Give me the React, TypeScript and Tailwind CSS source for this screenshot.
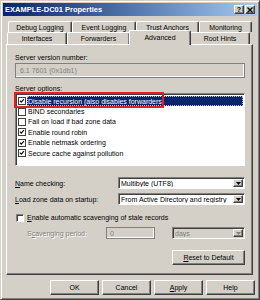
const raised =
  'border border-t-white border-l-white border-r-[#404040] border-b-[#404040] shadow-[inset_-1px_-1px_0_#808080]';
const sunken =
  'border border-t-[#808080] border-l-[#808080] border-r-white border-b-white shadow-[inset_1px_1px_0_#404040]';

const row1 = [
  { label: 'Debug Logging', w: 'w-[64px]' },
  { label: 'Event Logging', w: 'w-[64px]' },
  { label: 'Trust Anchors', w: 'w-[63px]' },
  { label: 'Monitoring', w: 'w-[53px]' },
];
const row2 = [
  { label: 'Interfaces', w: 'w-[60px]' },
  { label: 'Forwarders', w: 'w-[63px]' },
  { label: 'Advanced', w: 'w-[62px]', active: true },
  { label: 'Root Hints', w: 'w-[60px]' },
];

const options = [
  { label: 'Disable recursion (also disables forwarders)', checked: true, selected: true },
  { label: 'BIND secondaries', checked: false },
  { label: 'Fail on load if bad zone data', checked: false },
  { label: 'Enable round robin', checked: true },
  { label: 'Enable netmask ordering', checked: true },
  { label: 'Secure cache against pollution', checked: true },
];

function Check({ on, flat = false }: { on: boolean; flat?: boolean }) {
  return (
    <div className={`w-[8px] h-[8px] bg-white shrink-0 ${flat ? 'border border-[#404040]' : sunken}`}>
      {on && (
        <svg viewBox="0 0 8 8" className="w-full h-full block">
          <path d="M1.2 3.6 L3 5.5 L6.6 1.6" fill="none" stroke="#000" strokeWidth="1.4" />
        </svg>
      )}
    </div>
  );
}

function Arrow({ disabled = false }: { disabled?: boolean }) {
  return (
    <div className={`w-[10px] self-stretch bg-[#d4d0c8] ${raised} flex items-center justify-center`}>
      <svg viewBox="0 0 5 3" className="w-[5px] h-[3px]">
        <path d="M0 0 H5 L2.5 3 Z" fill={disabled ? '#808080' : '#000'} />
      </svg>
    </div>
  );
}

function Combo({ value, disabled = false, w = 'w-[127px]' }: { value: string; disabled?: boolean; w?: string }) {
  return (
    <div className={`${w} h-[12px] ${sunken} ${disabled ? 'bg-[#d4d0c8]' : 'bg-white'} flex items-center p-[1px] pl-[2px]`}>
      <span className={`flex-1 truncate ${disabled ? 'text-[#808080]' : ''}`}>{value}</span>
      <Arrow disabled={disabled} />
    </div>
  );
}

function Btn({ children, w = 'w-[49px]' }: { children: React.ReactNode; w?: string }) {
  return (
    <div className={`${w} h-[15px] bg-[#d4d0c8] ${raised} flex items-center justify-center`}>{children}</div>
  );
}

export default function App() {
  return (
    <div className="w-[260px] h-[300px] bg-[#d4d0c8] border border-t-[#d4d0c8] border-l-[#d4d0c8] border-r-[#404040] border-b-[#404040] shadow-[inset_1px_1px_0_#fff,inset_-1px_-1px_0_#808080] p-[1px] font-['Liberation_Sans',Arial,sans-serif] text-[7px] leading-none text-black flex flex-col">
      {/* Title bar */}
      <div className="h-[13px] mt-[1px] mx-[1px] bg-linear-to-r from-[#0a246a] to-[#a6caf0] flex items-center pl-[2px] pr-[2px]">
        <span className="text-white font-bold text-[7.5px] flex-1">EXAMPLE-DC01 Properties</span>
        <div className="flex gap-[1px]">
          <div className={`w-[10px] h-[9px] bg-[#d4d0c8] ${raised} flex items-center justify-center font-bold text-[7px]`}>?</div>
          <div className={`w-[10px] h-[9px] bg-[#d4d0c8] ${raised} flex items-center justify-center`}>
            <svg viewBox="0 0 6 6" className="w-[6px] h-[6px]">
              <path d="M0.5 0.5 L5.5 5.5 M5.5 0.5 L0.5 5.5" stroke="#000" strokeWidth="1.3" />
            </svg>
          </div>
        </div>
      </div>

      {/* Tabs */}
      <div className="mt-[5px] ml-[4px] w-[247px]">
        <div className="flex ml-[2px] h-[11px]">
          {row1.map(t => (
            <div key={t.label} className={`${t.w} h-full border border-b-0 border-t-white border-l-white border-r-[#404040] rounded-t-[2px] shadow-[inset_-1px_0_0_#808080] flex items-center justify-center`}>
              {t.label}
            </div>
          ))}
        </div>
        <div className="flex ml-[1px] h-[12px] relative">
          {row2.map(t =>
            t.active ? (
              <div key={t.label} className={`${t.w} -mx-[1px] -mt-[2px] h-[15px] relative z-10 bg-[#d4d0c8] border border-b-0 border-t-white border-l-white border-r-[#404040] rounded-t-[2px] shadow-[inset_-1px_0_0_#808080] flex items-center justify-center pb-[2px]`}>
                {t.label}
              </div>
            ) : (
              <div key={t.label} className={`${t.w} h-full border border-b-0 border-t-white border-l-white border-r-[#404040] rounded-t-[2px] shadow-[inset_-1px_0_0_#808080] flex items-center justify-center`}>
                {t.label}
              </div>
            )
          )}
        </div>

        {/* Panel */}
        <div className="h-[231px] border border-t-white border-l-white border-r-[#404040] border-b-[#404040] shadow-[inset_-1px_-1px_0_#808080] pl-[8px] pr-[7px] flex flex-col">
          <div className="mt-[9px] h-[7px]">Server version number:</div>
          <div className="mt-[2px] h-[15px] bg-[#d4d0c8] border border-[#808080] shadow-[inset_-1px_-1px_0_#fff] flex items-center pl-[4px] text-[#808080]">
            6.1 7601 (0x1db1)
          </div>
          <div className="mt-[7px] h-[7px]">
            <span className="underline">S</span>erver options:
          </div>
          <div className={`relative mt-[1px] h-[73px] bg-white ${sunken} pt-[2px] pl-[1px] pr-[1px]`}>
            {options.map(o => (
              <div key={o.label} className="h-[10.4px] flex items-center pl-[1px]">
                <Check on={o.checked} flat />
                {o.selected ? (
                  <div className="flex-1 h-[10px] ml-[1px] bg-[#0a246a] text-white flex items-center pl-[1px] outline-1 outline-dotted outline-[#c0c0c0] -outline-offset-1">
                    {o.label}
                  </div>
                ) : (
                  <div className="flex-1 ml-[2px]">{o.label}</div>
                )}
              </div>
            ))}
            <div className="absolute left-[-2px] top-[-2px] w-[150px] h-[16px] border-2 border-[#e21f26]" />
          </div>

          <div className="mt-[11px] h-[12px] flex items-center justify-between">
            <span>
              <span className="underline">N</span>ame checking:
            </span>
            <Combo value="Multibyte (UTF8)" />
          </div>
          <div className="mt-[4px] h-[12px] flex items-center justify-between">
            <span>
              <span className="underline">L</span>oad zone data on startup:
            </span>
            <Combo value="From Active Directory and registry" />
          </div>

          <div className="mt-[8px] h-[9px] flex items-center gap-[3px] pl-[1px]">
            <Check on={false} />
            <span>
              <span className="underline">E</span>nable automatic scavenging of stale records
            </span>
          </div>

          <div className="mt-[5px] h-[12px] flex items-center">
            <span className="w-[91px] pl-[12px] text-[#808080] [text-shadow:1px_1px_0_#fff]">
              S<span className="underline">c</span>avenging period:
            </span>
            <div className="w-[49px] h-[12px] bg-[#d4d0c8] border border-[#808080] shadow-[inset_-1px_-1px_0_#fff] flex items-center pl-[3px] text-[#808080]">
              0
            </div>
            <div className="ml-auto">
              <Combo value="days" disabled w="w-[73px]" />
            </div>
          </div>

          <div className="mt-[11px] flex justify-end">
            <Btn w="w-[73px]">
              <span>
                <span className="underline">R</span>eset to Default
              </span>
            </Btn>
          </div>
        </div>
      </div>

      {/* Buttons */}
      <div className="mt-[5px] flex justify-end gap-[3px] pr-[3px]">
        <Btn>OK</Btn>
        <Btn>Cancel</Btn>
        <Btn>
          <span>
            <span className="underline">A</span>pply
          </span>
        </Btn>
        <Btn>Help</Btn>
      </div>
    </div>
  );
}
